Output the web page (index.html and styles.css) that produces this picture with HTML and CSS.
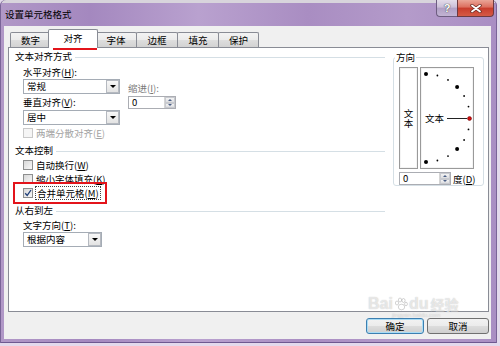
FILE: index.html
```html
<!DOCTYPE html>
<html lang="zh-CN">
<head>
<meta charset="utf-8">
<title>设置单元格格式</title>
<link rel="stylesheet" href="styles.css">
</head>
<body>
<div class="window">
  <div class="titlebar">
    <span class="title">设置单元格格式</span>
    <div class="caption">
      <span class="cap-help">?</span>
      <span class="cap-close">
        <svg width="12" height="9" viewBox="0 0 12 9"><path d="M2 1.5 L10 7.5 M10 1.5 L2 7.5" stroke="#6a2a22" stroke-width="3.4" stroke-linecap="round"/><path d="M2 1.5 L10 7.5 M10 1.5 L2 7.5" stroke="#fff" stroke-width="1.8" stroke-linecap="round"/></svg>
      </span>
    </div>
  </div>
  <div class="client">
    <div class="tabs">
      <div class="tab t1">数字</div>
      <div class="tab sel">对齐</div>
      <div class="tab t3">字体</div>
      <div class="tab t3">边框</div>
      <div class="tab t3">填充</div>
      <div class="tab t1">保护</div>
    </div>
    <div class="panel">
      <div class="left">
        <div class="ghead"><span>文本对齐方式</span></div>
        <div class="align-grid">
          <div class="acol">
            <div class="lbl">水平对齐(<u>H</u>):</div>
            <div class="select wide"><span class="val">常规</span><span class="dd"><i></i></span></div>
            <div class="lbl gap1">垂直对齐(<u>V</u>):</div>
            <div class="select wide gap1"><span class="val">居中</span><span class="dd"><i></i></span></div>
          </div>
          <div class="indent">
            <div class="lbl gray">缩进(<u>I</u>):</div>
            <div class="spin gap1"><span class="v">0</span><span class="arrows"><b class="up"></b><b class="down"></b></span></div>
          </div>
        </div>
        <div class="chk disabled gap1 ind"><span class="box"></span><span>两端分散对齐(<u>E</u>)</span></div>
        <div class="ghead gap2"><span>文本控制</span></div>
        <div class="chk ind"><span class="box"></span><span>自动换行(<u>W</u>)</span></div>
        <div class="chk ind"><span class="box"></span><span>缩小字体填充(<u>K</u>)</span></div>
        <div class="chk ind"><span class="box checked"><svg width="8" height="8" viewBox="0 0 8 8"><path d="M1.2 4.2 L3.2 6.4 L7 1" fill="none" stroke="#1f3e78" stroke-width="1.3"/></svg></span><span class="focus">合并单元格(<u>M</u>)</span></div>
        <div class="ghead gap2"><span>从右到左</span></div>
        <div class="lbl ind">文字方向(<u>T</u>):</div>
        <div class="select narrow ind"><span class="val">根据内容</span><span class="dd"><i></i></span></div>
      </div>
      <fieldset class="orient">
        <legend>方向</legend>
        <div class="orient-body">
          <div class="orient-row">
            <div class="vbox"><span class="vtext">文本</span></div>
            <div class="dial">
              <svg width="52" height="100" viewBox="0 0 52 100">
                <circle cx="5" cy="6" r="2" fill="#000"/>
                <circle cx="16.4" cy="7.5" r="0.9" fill="#000"/>
                <circle cx="27" cy="11.9" r="0.9" fill="#000"/>
                <circle cx="36.1" cy="18.9" r="2" fill="#000"/>
                <circle cx="43.1" cy="28" r="0.9" fill="#000"/>
                <circle cx="47.5" cy="38.6" r="0.9" fill="#000"/>
                <circle cx="47.5" cy="61.4" r="0.9" fill="#000"/>
                <circle cx="43.1" cy="72" r="0.9" fill="#000"/>
                <circle cx="36.1" cy="81.1" r="2" fill="#000"/>
                <circle cx="27" cy="88.1" r="0.9" fill="#000"/>
                <circle cx="16.4" cy="92.5" r="0.9" fill="#000"/>
                <circle cx="5" cy="94" r="2" fill="#000"/>
                <line x1="26" y1="50.5" x2="46" y2="50.5" stroke="#222" stroke-width="1"/>
                <circle cx="48.5" cy="50.5" r="2" fill="#d01010" stroke="#600" stroke-width="0.5"/>
                <text x="4" y="54" class="dial-text">文本</text>
              </svg>
            </div>
          </div>
          <div class="orient-spin">
            <div class="spin deg"><span class="v">0</span><span class="arrows"><b class="up"></b><b class="down"></b></span></div>
            <span class="deg-lbl">度(<u>D</u>)</span>
          </div>
        </div>
      </fieldset>
    </div>
    <div class="buttons">
      <div class="btn ok">确定</div>
      <div class="btn cancel">取消</div>
    </div>
  </div>
  <div class="redbox rb-tab"></div>
  <div class="redbox rb-merge"></div>
  <div class="watermark">
    <div class="wm1"><span>Bai</span><svg width="14" height="14" viewBox="0 0 14 14"><g fill="rgba(255,255,255,0.7)" stroke="rgba(120,120,120,0.4)" stroke-width="0.8"><ellipse cx="3" cy="6" rx="1.6" ry="2"/><ellipse cx="6" cy="3" rx="1.6" ry="2"/><ellipse cx="9.5" cy="3.5" rx="1.6" ry="2"/><ellipse cx="12" cy="7" rx="1.4" ry="1.8"/><ellipse cx="7.5" cy="10" rx="3.2" ry="2.8"/></g></svg><span>du</span><span class="cn">经验</span></div>
    <div class="wm2">jingyan.baidu.com</div>
  </div>
</div>
</body>
</html>
```

FILE: styles.css
```css
* { box-sizing: border-box; }

body {
  margin: 0;
  width: 500px;
  height: 346px;
  overflow: hidden;
  background: #e3d9ec;
  font-family: "Noto Sans CJK SC", "Liberation Sans", sans-serif;
  font-size: 9.5px;
  color: #000;
}

u { text-decoration: underline; }

.window {
  position: relative;
  width: 497px;
  height: 343px;
  display: flex;
  flex-direction: column;
  padding: 0 6px 4px 4px;
  background:
    linear-gradient(#d8d4dc, #d8d4dc) top left / 100% 3px no-repeat,
    linear-gradient(90deg, #b198c7 0%, #a488bf 18%, #b9a1cf 40%, #a98dc2 62%, #b49bca 82%, #a98ec3 100%);
  box-shadow: inset 1px 0 0 #7a6498, inset -1px 0 0 #7a6498, inset 0 -1px 0 #6e5890;
  border-radius: 5px 5px 0 0;
}

.titlebar {
  flex: none;
  height: 26px;
  display: flex;
  align-items: flex-start;
}

.title {
  align-self: center;
  margin-left: 1px;
  margin-top: 1px;
  line-height: 12px;
  color: #000;
}

.caption {
  margin-left: auto;
  margin-right: -3px;
  display: flex;
}

.cap-help {
  width: 21px;
  height: 17px;
  border: 1px solid #6d5d80;
  border-top: none;
  border-right: none;
  border-radius: 0 0 0 4px;
  background: linear-gradient(#e3dce9 0%, #cbbfd8 45%, #b09fc4 50%, #c2b3d3 100%);
  color: #fff;
  font-family: "Liberation Sans", sans-serif;
  font-weight: bold;
  font-size: 11px;
  line-height: 16px;
  text-align: center;
  text-shadow: 0 0 1px #444, 0 0 1px #444;
}

.cap-close {
  width: 37px;
  height: 17px;
  border: 1px solid #6d3a40;
  border-top: none;
  border-radius: 0 0 4px 0;
  background: linear-gradient(#eaa597 0%, #dc6e5e 45%, #c83c2c 50%, #d55a45 100%);
  display: flex;
  align-items: center;
  justify-content: center;
}

.client {
  flex: 1;
  background: #f0f0f0;
  padding: 3px 2px 0 4px;
  display: flex;
  flex-direction: column;
}

.tabs {
  flex: none;
  height: 18px;
  padding-left: 2px;
  display: flex;
  align-items: flex-end;
  position: relative;
  z-index: 1;
}

.tab {
  height: 15px;
  margin-right: -1px;
  border: 1px solid #898c95;
  border-bottom: none;
  border-radius: 2px 2px 0 0;
  background: linear-gradient(#f3f3f3 0%, #ebebeb 50%, #dedede 50%, #d2d2d2 100%);
  display: flex;
  align-items: center;
  justify-content: center;
  line-height: 12px;
}

.t1 { width: 41px; }
.t3 { width: 42px; }

.tab.sel {
  width: 50px;
  height: 19px;
  margin-left: -2px;
  margin-right: -3px;
  margin-bottom: -1px;
  padding-bottom: 2px;
  background: #fff;
  position: relative;
  z-index: 2;
}

.panel {
  flex: none;
  height: 265px;
  border: 1px solid #898c95;
  background: #fff;
  display: grid;
  grid-template-columns: 1fr 91px;
  column-gap: 8px;
  padding: 0 4px 0 6px;
  align-items: start;
}

.left {
  display: flex;
  flex-direction: column;
}

.ghead {
  height: 16px;
  display: flex;
  align-items: center;
  line-height: 12px;
}

.ghead::after {
  content: "";
  flex: 1;
  height: 0;
  border-top: 1px solid #d5dfe5;
  margin-left: 3px;
  margin-top: 2px;
}

.gap1 { margin-top: 1px; }
.gap2 { margin-top: 2px; }
.ind { margin-left: 8px; }

.align-grid {
  display: flex;
  margin-top: 1px;
  padding-left: 8px;
}

.acol {
  width: 97px;
  display: flex;
  flex-direction: column;
}

.indent {
  margin-left: 8px;
  padding-top: 16px;
  display: flex;
  flex-direction: column;
}

.lbl {
  height: 14px;
  line-height: 14px;
  white-space: nowrap;
}

.gray { color: #7a7a7a; }

.select {
  height: 15px;
  border: 1px solid #a5acb5;
  background: #fff;
  display: flex;
}

.select.wide { width: 97px; }
.select.narrow { width: 79px; }

.select .val {
  flex: 1;
  padding-left: 3px;
  line-height: 13px;
}

.dd {
  width: 13px;
  height: 13px;
  border: 1px solid #b5b9c0;
  background: linear-gradient(#f7f7f7, #e3e3e3);
  display: flex;
  align-items: center;
  justify-content: center;
}

.dd i {
  width: 0;
  height: 0;
  border-left: 3px solid transparent;
  border-right: 3px solid transparent;
  border-top: 3px solid #000;
}

.spin {
  width: 48px;
  height: 13px;
  border: 1px solid #abadb3;
  background: #fff;
  display: flex;
}

.spin.deg { width: 52px; }

.spin .v {
  flex: 1;
  padding-left: 3px;
  line-height: 11px;
}

.arrows {
  width: 11px;
  display: flex;
  flex-direction: column;
  border-left: 1px solid #d5d5d5;
}

.arrows b {
  flex: 1;
  background: linear-gradient(#f4f4f4, #dcdde0);
  display: flex;
  align-items: center;
  justify-content: center;
  border: 1px solid #c8cacf;
}

.arrows b::before {
  content: "";
  border-left: 2px solid transparent;
  border-right: 2px solid transparent;
}

.arrows .up::before { border-bottom: 2px solid #4a5f85; }
.arrows .down::before { border-top: 2px solid #4a5f85; }

.chk {
  height: 14px;
  display: flex;
  align-items: center;
  line-height: 12px;
  white-space: nowrap;
}

.chk .box {
  width: 10px;
  height: 10px;
  margin-right: 3px;
  border: 1px solid #8e8f8f;
  background: linear-gradient(135deg, #d8d8d8, #f8f8f8);
  display: flex;
  align-items: center;
  justify-content: center;
}

.chk.disabled { color: #a3a3a3; }
.chk.disabled .box {
  border-color: #c9c9c9;
  background: #f5f5f5;
}

.focus {
  margin-left: -1px;
  padding: 0 1px;
  border: 1px dotted #444;
}

.orient {
  margin: 3px 0 0;
  padding: 0;
  min-width: 0;
  border: 1px solid #d5dfe5;
  border-radius: 3px;
}

.orient legend {
  margin-left: 1px;
  padding: 0 1px;
  line-height: 12px;
  font-size: 9.5px;
}

.orient-body {
  padding: 4px 5px 0;
}

.orient-row {
  height: 102px;
  display: flex;
  gap: 2px;
}

.vbox {
  width: 19px;
  border: 1px solid #9a9a9a;
  box-shadow: inset 0 0 0 1px #f4f4f4;
  display: flex;
  align-items: center;
  justify-content: center;
}

.vtext {
  writing-mode: vertical-rl;
  text-orientation: upright;
  line-height: 12px;
  letter-spacing: 0;
}

.dial {
  width: 54px;
  border: 1px solid #9a9a9a;
  box-shadow: inset 0 0 0 1px #f4f4f4;
}

.dial svg { display: block; }

.dial-text {
  font-family: "Noto Sans CJK SC", sans-serif;
  font-size: 9.5px;
  fill: #000;
}

.orient-spin {
  margin-top: 3px;
  height: 13px;
  display: flex;
  align-items: center;
}

.deg-lbl {
  margin-left: 2px;
  line-height: 12px;
  white-space: nowrap;
}

.buttons {
  margin-top: 6px;
  display: flex;
  justify-content: flex-end;
  gap: 3px;
}

.btn {
  height: 16px;
  border: 1px solid #707070;
  border-radius: 3px;
  background: linear-gradient(#f2f2f2 0%, #ebebeb 50%, #dddddd 50%, #cfcfcf 100%);
  display: flex;
  align-items: center;
  justify-content: center;
  line-height: 12px;
}

.btn.ok {
  width: 58px;
  border-color: #3c7fb1;
  box-shadow: inset 0 0 0 1px #a9dcf5;
}

.btn.cancel { width: 62px; }

.redbox {
  position: absolute;
  border: 2px solid #e3141b;
  pointer-events: none;
}

.rb-tab {
  left: 53px;
  top: 31px;
  width: 44px;
  height: 19px;
}

.rb-merge {
  left: 13px;
  top: 182px;
  width: 94px;
  height: 22px;
}

.watermark {
  position: absolute;
  left: 368px;
  top: 296px;
  color: rgba(255, 255, 255, 0.6);
  text-shadow: 0 0 1px rgba(90, 90, 90, 0.4);
  pointer-events: none;
}

.wm1 {
  display: flex;
  align-items: center;
  height: 16px;
  font-family: "Liberation Sans", sans-serif;
  font-weight: bold;
  font-size: 16px;
  line-height: 16px;
}

.wm1 svg { margin: 0 1px; }

.wm1 .cn {
  font-family: "Noto Sans CJK SC", sans-serif;
  font-size: 14px;
  line-height: 16px;
  margin-left: 2px;
}

.wm2 {
  margin-left: 24px;
  font-family: "Liberation Sans", sans-serif;
  font-size: 6px;
  line-height: 6px;
}
```
